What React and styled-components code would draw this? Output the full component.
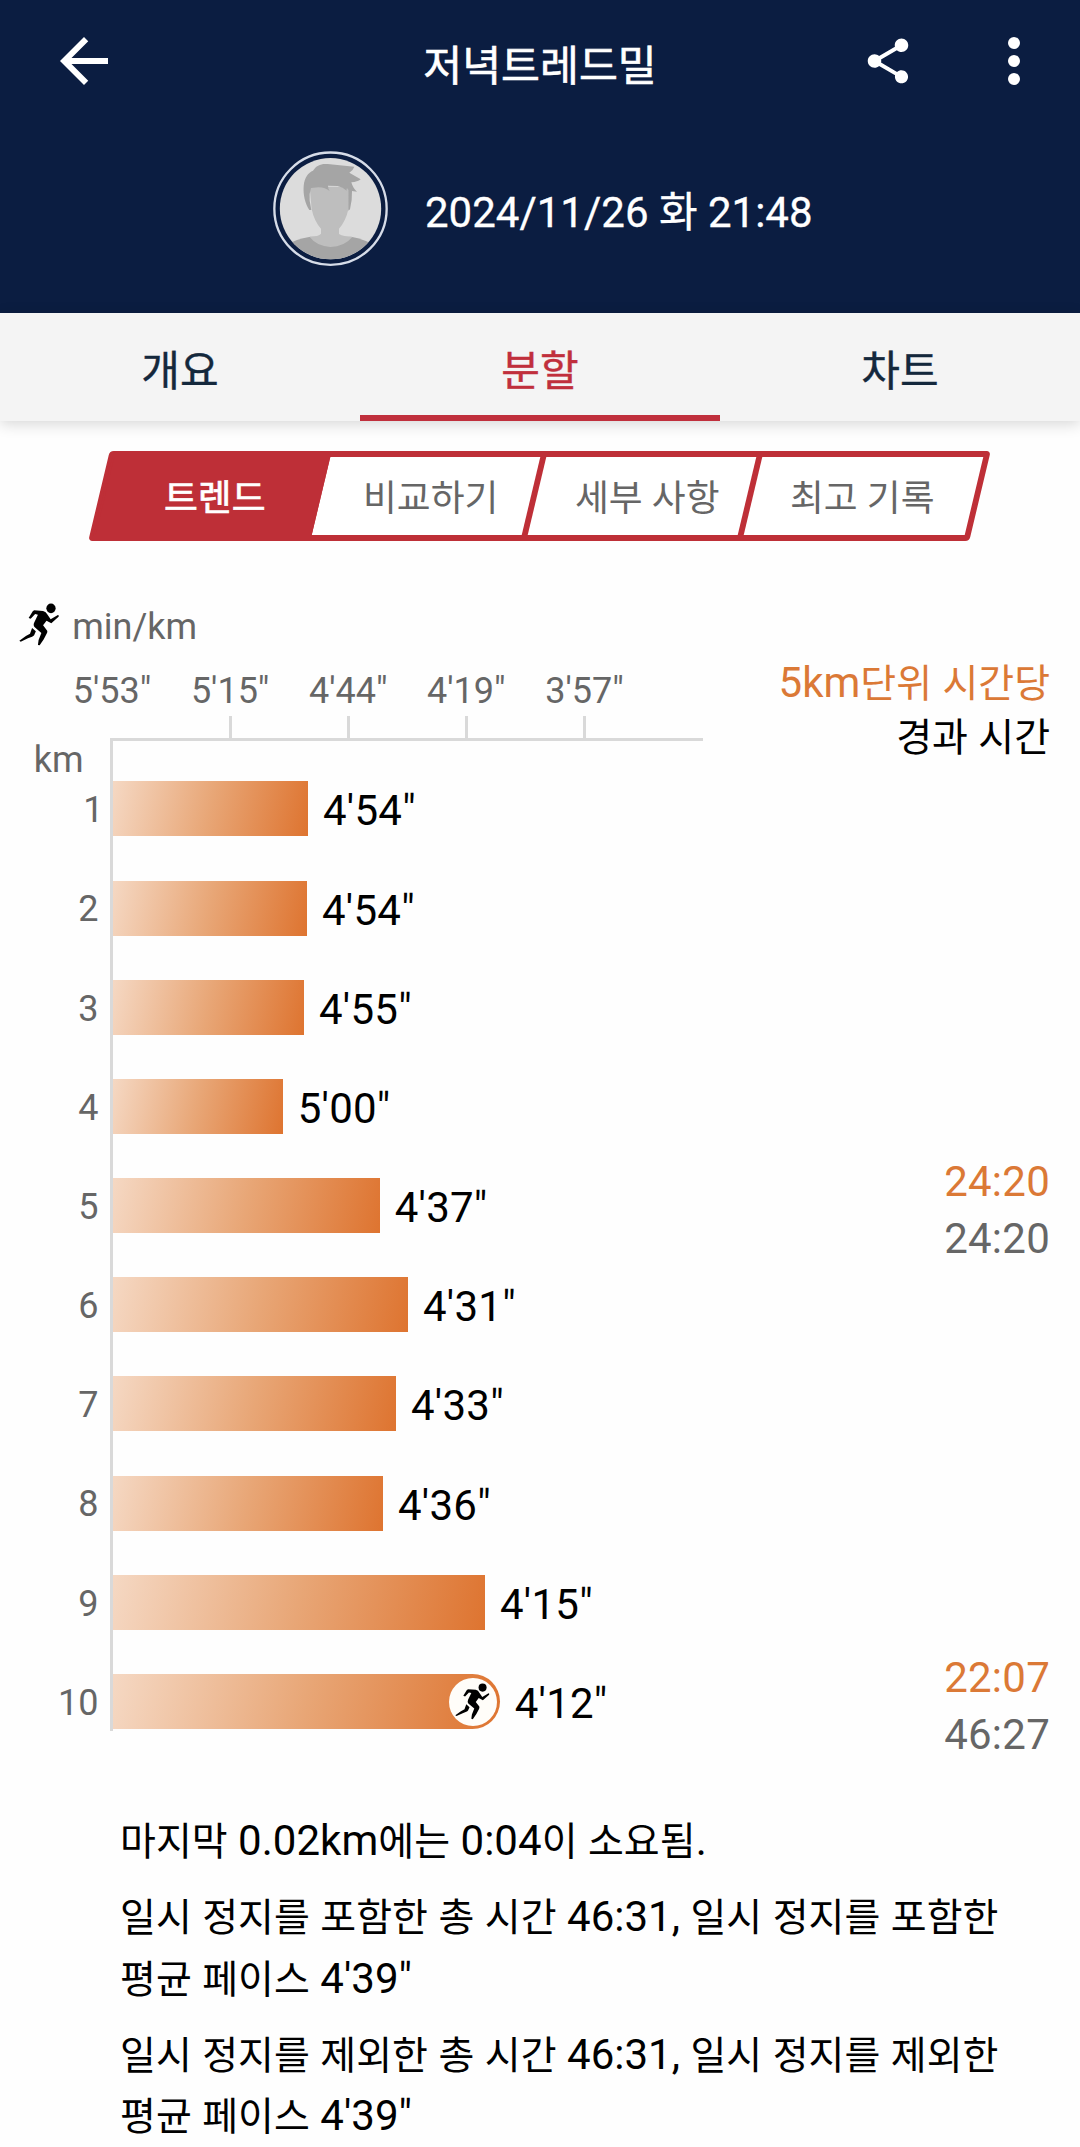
import React from "react";
import styled, { createGlobalStyle } from "styled-components";

const NAVY = "#0b1d41";
const RED = "#be2f37";
const ORANGE = "#db7936";
const GREY = "#666666";
const LINE = "#d9d9d9";

const GlobalStyle = createGlobalStyle`
  * { box-sizing: border-box; }
  body {
    margin: 0;
    background: #fefefe;
    font-family: Roboto, "Noto Sans CJK KR", sans-serif;
    color: #000;
  }
`;

const Screen = styled.div`
  width: 1080px;
  height: 2147px;
  overflow: hidden;
  display: flex;
  flex-direction: column;
`;

const Header = styled.header`
  height: 312.6px;
  flex: none;
  background: ${NAVY};
  color: #fff;
`;

const AppBar = styled.div`
  height: 121.2px;
  padding: 0 30px 0 48px;
  display: grid;
  grid-template-columns: 1fr auto 1fr;
  align-items: center;
`;

const Title = styled.h1`
  margin: 0;
  padding: 12px 18px 0 0;
  font-size: 42.3px;
  line-height: 50px;
  font-weight: 400;
  -webkit-text-stroke: 0.6px currentColor;
`;

const Actions = styled.div`
  display: flex;
  justify-content: flex-end;
  align-items: center;
  gap: 63px;
`;

const Icon = styled.svg`
  display: block;
  flex: none;
  width: ${(p) => p.$w}px;
  height: ${(p) => p.$h ?? p.$w}px;
  fill: currentColor;
`;

const Profile = styled.div`
  display: flex;
  align-items: center;
  gap: 37px;
  padding: 30px 0 0 273px;
`;

const DateText = styled.div`
  font-size: 42px;
  line-height: 50px;
  padding-top: 9px;
  white-space: nowrap;
  -webkit-text-stroke: 0.3px currentColor;
`;

const Hangul = styled.span`
  font-size: 0.928em;
  line-height: 0;
`;

const Tabs = styled.nav`
  height: 108.4px;
  flex: none;
  display: grid;
  grid-template-columns: repeat(3, 1fr);
  background: #f4f4f4;
  box-shadow: 0 3px 14px rgba(0, 0, 0, 0.16);
`;

const Tab = styled.div`
  display: flex;
  justify-content: center;
  align-items: center;
  padding-top: 16px;
  font-size: 42px;
  line-height: 50px;
  -webkit-text-stroke: 0.4px currentColor;
  color: ${(p) => (p.$active ? "#c02f3c" : "#14283c")};
  border-bottom: 6.5px solid ${(p) => (p.$active ? "#c02f3c" : "transparent")};
`;

const Segments = styled.div`
  flex: none;
  display: flex;
  width: 881px;
  height: 90px;
  margin: 29.6px 0 0 99.2px;
  border: 6px solid ${RED};
  border-radius: 4px;
  transform: skewX(-13.4deg);
  background: #fff;
`;

const Segment = styled.div`
  flex: none;
  width: ${(p) => p.$w}px;
  display: flex;
  justify-content: center;
  align-items: center;
  color: ${(p) => (p.$active ? "#fff" : GREY)};
  -webkit-text-stroke: ${(p) => (p.$active ? "0.7px currentColor" : "0")};
  border-left: ${(p) => (p.$divided ? `6px solid ${RED}` : "none")};
  background: ${(p) => (p.$active ? RED : "transparent")};
  box-shadow: ${(p) => (p.$active ? `-1px 0 0 1px ${RED}` : "none")};
`;

const SegmentText = styled.span`
  display: block;
  font-size: 36.8px;
  line-height: 44px;
  padding-top: 6px;
  margin-left: ${(p) => p.$shift}px;
  transform: skewX(13.4deg);
  white-space: nowrap;
`;

const Unit = styled.div`
  flex: none;
  display: flex;
  align-items: flex-start;
  gap: 13px;
  margin-top: 62.3px;
  padding-left: 18.6px;
  height: 66.6px;
  font-size: 36px;
  line-height: 48px;
  color: ${GREY};
  svg { color: #000; }
`;

const Chart = styled.section`
  flex: none;
  display: grid;
  grid-template-columns: 703px 1fr;
  height: 1061.5px;
`;

const PlotColumn = styled.div`
  display: flex;
  flex-direction: column;
`;

const Axis = styled.div`
  display: flex;
  height: 68.7px;
  padding-left: 53px;
`;

const AxisItem = styled.div`
  width: 118.1px;
  display: flex;
  flex-direction: column;
  align-items: center;
  justify-content: space-between;
  font-size: 36px;
  line-height: 44px;
  color: ${GREY};
`;

const Tick = styled.i`
  width: 3px;
  height: 22.4px;
  background: ${LINE};
`;

const Body = styled.div`
  display: grid;
  grid-template-columns: 110px 1fr;
  align-items: start;
`;

const Labels = styled.div`
  font-size: 36px;
  color: ${GREY};
  text-align: right;
`;

const KmHeading = styled.div`
  height: 44px;
  line-height: 44px;
  padding-right: 26.5px;
`;

const Label = styled.div`
  height: 55px;
  line-height: 56px;
  margin-bottom: 44.2px;
  padding-right: ${(p) => (p.$narrow ? 6.5 : 11.5)}px;
  &:last-child { margin-bottom: 0; }
`;

const Plot = styled.div`
  display: flex;
  flex-direction: column;
  gap: 44.2px;
  padding: 40.2px 0 2px;
  border-top: 3px solid ${LINE};
  border-left: 3px solid ${LINE};
`;

const Row = styled.div`
  display: flex;
  align-items: flex-start;
  gap: 15px;
  height: 55px;
  font-size: 42px;
  line-height: 59px;
  letter-spacing: 0.25px;
`;

const Bar = styled.div`
  height: 55px;
  display: flex;
  align-items: center;
  justify-content: flex-end;
  padding-right: 3px;
  background: linear-gradient(102deg, #f5d8c3 0%, #e8a676 50%, #de7430 100%);
  border-radius: ${(p) => (p.$rounded ? "0 28px 28px 0" : "0")};
`;

const Badge = styled.span`
  display: grid;
  place-items: center;
  width: 48px;
  height: 48px;
  border-radius: 50%;
  background: #fffdf9;
`;

const Times = styled.aside`
  padding-right: 30px;
  margin-top: -13.5px;
  text-align: right;
  font-size: 42px;
`;

const Legend = styled.div`
  line-height: 54px;
  white-space: nowrap;
`;

const Split = styled.div`
  margin-top: ${(p) => p.$top}px;
  line-height: 56.4px;
  letter-spacing: 0.25px;
  color: ${GREY};
`;

const Accent = styled.div`
  color: ${ORANGE};
`;

const Notes = styled.section`
  flex: none;
  padding: 79.3px 70px 0 120px;
  font-size: 42px;
  line-height: 61.4px;
  letter-spacing: 0.03px;
  word-break: keep-all;
`;

const Note = styled.p`
  margin: 0 0 14.8px;
`;

const splits = [
  ["4'54\"", 308],
  ["4'54\"", 307],
  ["4'55\"", 304],
  ["5'00\"", 282.7],
  ["4'37\"", 379.7],
  ["4'31\"", 408],
  ["4'33\"", 396],
  ["4'36\"", 383],
  ["4'15\"", 485],
  ["4'12\"", 499.7],
];

const segments = [
  { text: "트렌드", w: 216, shift: 3 },
  { text: "비교하기", w: 209.7, shift: 10 },
  { text: "세부 사항", w: 216.2, divided: true, shift: 10 },
  { text: "최고 기록", w: 227.1, divided: true, shift: -3 },
];

// Hangul runs are set slightly smaller than the Latin digits beside them.
const Mixed = ({ children }) =>
  children
    .split(/([\uac00-\ud7a3]+)/)
    .map((part, i) => (i % 2 ? <Hangul key={i}>{part}</Hangul> : part));

const Runner = ({ w, h }) => (
  <Icon viewBox="54 70 118 130" preserveAspectRatio="none" $w={w} $h={h}>
    <ellipse cx="147" cy="86" rx="13.5" ry="14.5" />
    <path d="M98 92 L124 94 Q133 96 136 104 L146 119 L167 106 Q171 107 169 111 L148 131 L134 123 L124 137 L136 153 Q137 157 135 161 L126 179 L114 197 L109 196 L111 181 L119 160 L99 142 Q95 137 98 129 L109 105 L101 103 L88 117 L82 115 L94 95 Z" />
    <path d="M92 145 L103 155 L98 167 Q96 170 92 171 L80 176 L59 186 L55 183 L74 169 L86 162 Z" />
  </Icon>
);

const Avatar = () => (
  <Icon viewBox="68 33 345 346" $w={115} $h={115.4}>
    <defs>
      <clipPath id="portrait">
        <circle cx="240.5" cy="206" r="152" />
      </clipPath>
    </defs>
    <circle cx="240.5" cy="206" r="168.5" fill="none" stroke="#d6dce8" strokeWidth="7" />
    <g clipPath="url(#portrait)">
      <rect x="80" y="40" width="320" height="330" fill="#dcdcdc" />
      <path d="M100 320 Q135 296 180 290 L302 290 Q345 298 380 320 V380 H100 Z" fill="#a5a5a5" />
      <path d="M178 140 H295 L295 205 Q286 245 266 266 V282 Q280 290 306 291 Q282 320 240 321 Q200 319 178 291 Q205 289 212 281 V266 Q192 245 184 208 Z" fill="#bebebe" />
      <path d="M177 210 C164 190 158 165 160 138 C163 110 174 98 188 92 C198 76 212 70 232 72 L312 80 Q308 92 297 98 L331 118 Q322 126 303 127 Q308 145 320 155 L305 153 Q306 180 299 208 L294 212 L294 150 L290 144 Q288 148 289 152 Q278 142 262 138 L233 137 Q233 146 238 153 Q225 143 205 142 L182 144 Q176 160 178 182 L183 210 Z" fill="#a5a5a5" />
    </g>
  </Icon>
);

export default function App() {
  return (
    <Screen>
      <GlobalStyle />
      <Header>
        <AppBar>
          <Icon viewBox="0 0 24 24" $w={72}>
            <path d="M20 11H7.83l5.59-5.59L12 4l-8 8 8 8 1.41-1.41L7.83 13H20v-2z" />
          </Icon>
          <Title>저녁트레드밀</Title>
          <Actions>
            <Icon viewBox="0 0 24 24" $w={54}>
              <path d="M18 16.08c-.76 0-1.44.3-1.96.77L8.91 12.7c.05-.23.09-.46.09-.7s-.04-.47-.09-.7l7.05-4.11c.54.5 1.25.81 2.04.81 1.66 0 3-1.34 3-3s-1.34-3-3-3-3 1.34-3 3c0 .24.04.47.09.7L8.04 9.81C7.5 9.31 6.79 9 6 9c-1.66 0-3 1.34-3 3s1.34 3 3 3c.79 0 1.5-.31 2.04-.81l7.12 4.16c-.05.21-.08.43-.08.65 0 1.61 1.31 2.92 2.92 2.92 1.61 0 2.92-1.31 2.92-2.92s-1.31-2.92-2.92-2.92z" />
            </Icon>
            <Icon viewBox="0 0 24 24" $w={72}>
              <circle cx="12" cy="6" r="2" />
              <circle cx="12" cy="12" r="2" />
              <circle cx="12" cy="18" r="2" />
            </Icon>
          </Actions>
        </AppBar>
        <Profile>
          <Avatar />
          <DateText>2024/11/26 화 21:48</DateText>
        </Profile>
      </Header>

      <Tabs>
        <Tab>개요</Tab>
        <Tab $active>분할</Tab>
        <Tab>차트</Tab>
      </Tabs>

      <Segments>
        {segments.map((s, i) => (
          <Segment key={s.text} $w={s.w} $active={i === 0} $divided={s.divided}>
            <SegmentText $shift={s.shift}>{s.text}</SegmentText>
          </Segment>
        ))}
      </Segments>

      <Unit>
        <Runner w={40.6} h={43.3} />
        min/km
      </Unit>

      <Chart>
        <PlotColumn>
          <Axis>
            {["5'53\"", "5'15\"", "4'44\"", "4'19\"", "3'57\""].map((t, i) => (
              <AxisItem key={t}>
                {t}
                {i > 0 && <Tick />}
              </AxisItem>
            ))}
          </Axis>
          <Body>
            <Labels>
              <KmHeading>km</KmHeading>
              {splits.map((_, i) => (
                <Label key={i} $narrow={i === 0}>
                  {i + 1}
                </Label>
              ))}
            </Labels>
            <Plot>
              {splits.map(([pace, end], i) => {
                const last = i === splits.length - 1;
                return (
                  <Row key={i}>
                    <Bar $rounded={last} style={{ width: end - 113 }}>
                      {last && (
                        <Badge>
                          <Runner w={35} h={37} />
                        </Badge>
                      )}
                    </Bar>
                    {pace}
                  </Row>
                );
              })}
            </Plot>
          </Body>
        </PlotColumn>
        <Times>
          <Legend>
            <Accent>
              <Mixed>5km단위 시간당</Mixed>
            </Accent>
            <Mixed>경과 시간</Mixed>
          </Legend>
          <Split $top={390.4}>
            <Accent>24:20</Accent>
            24:20
          </Split>
          <Split $top={383.2}>
            <Accent>22:07</Accent>
            46:27
          </Split>
        </Times>
      </Chart>

      <Notes>
        <Note>
          <Mixed>마지막 0.02km에는 0:04이 소요됨.</Mixed>
        </Note>
        <Note>
          <Mixed>일시 정지를 포함한 총 시간 46:31, 일시 정지를 포함한 평균 페이스 4'39"</Mixed>
        </Note>
        <Note>
          <Mixed>일시 정지를 제외한 총 시간 46:31, 일시 정지를 제외한 평균 페이스 4'39"</Mixed>
        </Note>
      </Notes>
    </Screen>
  );
}
